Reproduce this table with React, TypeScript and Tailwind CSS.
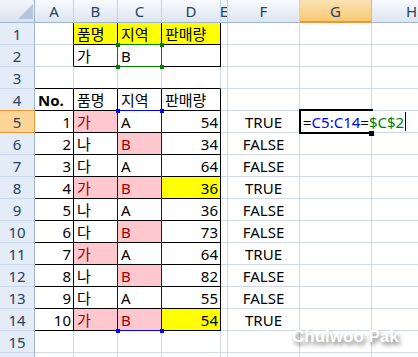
import React from "react";

const cols = ["A", "B", "C", "D", "E", "F", "G", "H"];

type Cell = {
	v?: string;
	align?: "l" | "r" | "c";
	fill?: "yellow" | "pink";
	bold?: boolean;
};

const data = [
	{ no: "1", item: "가", area: "A", qty: "54", ok: "TRUE" },
	{ no: "2", item: "나", area: "B", qty: "34", ok: "FALSE" },
	{ no: "3", item: "다", area: "A", qty: "64", ok: "FALSE" },
	{ no: "4", item: "가", area: "B", qty: "36", ok: "TRUE" },
	{ no: "5", item: "나", area: "A", qty: "36", ok: "FALSE" },
	{ no: "6", item: "다", area: "B", qty: "73", ok: "FALSE" },
	{ no: "7", item: "가", area: "A", qty: "64", ok: "TRUE" },
	{ no: "8", item: "나", area: "B", qty: "82", ok: "FALSE" },
	{ no: "9", item: "다", area: "A", qty: "55", ok: "FALSE" },
	{ no: "10", item: "가", area: "B", qty: "54", ok: "TRUE" },
];

function getCell(r: number, c: number): Cell {
	if (r === 1 && c >= 2 && c <= 4) {
		return { v: ["품명", "지역", "판매량"][c - 2], fill: "yellow" };
	}
	if (r === 2 && c === 2) return { v: "가" };
	if (r === 2 && c === 3) return { v: "B" };
	if (r === 4) {
		if (c === 1) return { v: "No.", bold: true };
		if (c >= 2 && c <= 4) return { v: ["품명", "지역", "판매량"][c - 2] };
	}
	if (r >= 5 && r <= 14) {
		const d = data[r - 5];
		if (c === 1) return { v: d.no, align: "r" };
		if (c === 2) return { v: d.item, fill: d.item === "가" ? "pink" : undefined };
		if (c === 3) return { v: d.area, fill: d.area === "B" ? "pink" : undefined };
		// conditional format: 가 + B rows
		if (c === 4) return { v: d.qty, align: "r", fill: d.item === "가" && d.area === "B" ? "yellow" : undefined };
		if (c === 6) return { v: d.ok, align: "c" };
	}
	return {};
}

// cells inside the two bordered tables (B1:D2, A4:D14)
function inTable(r: number, c: number) {
	return (r >= 1 && r <= 2 && c >= 2 && c <= 4) || (r >= 4 && r <= 14 && c >= 1 && c <= 4);
}

function Corner() {
	return (
		<div className="h-[23px] bg-linear-to-b from-[#f3f6fb] to-[#dae3ee] border-r border-b border-r-[#9eb6ce] border-b-[#9eb6ce] flex items-end justify-end pr-px pb-[3px]">
			<svg width="15" height="15">
				<polygon points="15,0 15,15 0,15" fill="#b4c6dc" />
			</svg>
		</div>
	);
}

function ColHeader({ label }: { label: string }) {
	const selected = label === "G";
	return (
		<div
			className={
				selected
					? "h-[23px] flex items-center justify-center overflow-hidden bg-linear-to-b from-[#fbe2b4] to-[#f7c971] border-r border-r-[#f2b35c] border-b-2 border-b-[#f29436] text-[#27415f]"
					: "h-[23px] flex items-center justify-center overflow-hidden bg-linear-to-b from-[#f8fafd] to-[#dde5f0] border-r border-r-[#c5d2e3] border-b border-b-[#9eb6ce] text-[#27415f]"
			}
		>
			<span className="leading-[21px] pt-px">{label}</span>
		</div>
	);
}

function RowHeader({ n }: { n: number }) {
	let cls = "h-[22px] flex items-center justify-center border-r border-b bg-[#e4ecf7] text-[#27415f] border-r-[#9eb6ce] border-b-[#c9d6e7]";
	if (n === 5) cls = "h-[22px] flex items-center justify-center border-r border-b bg-[#fcd597] text-[#27415f] border-r-[#f29436] border-b-[#f29436]";
	if (n === 4) cls = "h-[22px] flex items-center justify-center border-r border-b bg-[#e4ecf7] text-[#27415f] border-r-[#9eb6ce] border-b-[#f29436]";
	return (
		<div className={cls}>
			{/* row 16 only shows a sliver, its number stays below the fold */}
			<span className="leading-[21px] pt-px">{n < 16 ? n : ""}</span>
		</div>
	);
}

function DataCell({ r, c }: { r: number; c: number }) {
	const cell = getCell(r, c);
	const right = inTable(r, c) || inTable(r, c + 1) ? "border-r-black" : "border-r-[#d0d7e5]";
	const bottom = inTable(r, c) || inTable(r + 1, c) ? "border-b-black" : "border-b-[#d0d7e5]";
	const fill = cell.fill === "yellow" ? "bg-[#ffff00] text-black" : cell.fill === "pink" ? "bg-[#ffc7ce] text-[#9c0006]" : "bg-white text-black";
	const align = cell.align === "r" ? "justify-end pr-[2px]" : cell.align === "c" ? "justify-center" : "justify-start pl-[3px]";
	return (
		<div className={`h-[22px] flex overflow-visible whitespace-nowrap border-r border-b ${right} ${bottom} ${fill} ${align}`}>
			<span className={cell.bold ? "leading-[21px] pt-px font-bold" : "leading-[21px] pt-px"}>{cell.v}</span>
		</div>
	);
}

// formula reference box with the four little squares on its corners
function RangeBox({ className, color }: { className: string; color: string }) {
	return (
		<div className={`absolute border ${className}`}>
			<div className={`absolute -left-[2px] -top-[2px] w-[4px] h-[4px] ${color}`} />
			<div className={`absolute -right-[3px] -top-[2px] w-[4px] h-[4px] ${color}`} />
			<div className={`absolute -left-[2px] -bottom-[3px] w-[4px] h-[4px] ${color}`} />
			<div className={`absolute -right-[3px] -bottom-[3px] w-[4px] h-[4px] ${color}`} />
		</div>
	);
}

export default function App() {
	const rowNums = Array.from({ length: 16 }, (_, i) => i + 1);
	return (
		<div className="relative w-[418px] h-[357px] overflow-hidden bg-white text-[15px] font-['Noto_Sans','Noto_Sans_CJK_KR',sans-serif]">
			<div className="grid grid-cols-[35px_39px_44px_44px_59px_7px_72px_72px_80px] grid-rows-[23px_repeat(16,22px)] w-[452px]">
				<Corner />
				{cols.map((c) => (
					<ColHeader key={c} label={c} />
				))}
				{rowNums.map((r) => (
					<React.Fragment key={r}>
						<RowHeader n={r} />
						{cols.map((_, i) => (
							<DataCell key={i} r={r} c={i + 1} />
						))}
					</React.Fragment>
				))}
			</div>

			<RangeBox className="left-[117px] top-[44px] w-[45px] h-[23px] border-[#008000]" color="bg-[#008000]" />
			<RangeBox className="left-[117px] top-[110px] w-[45px] h-[221px] border-[#0000ff]" color="bg-[#0000ff]" />

			{/* G5 in edit mode */}
			<div className="absolute left-[299px] top-[109px] w-[74px] h-[25px] border-2 border-black">
				<div className="absolute left-0 top-0 h-[21px] flex items-start bg-white pl-[2px] pr-px whitespace-nowrap">
					<span className="leading-[21px] pt-px">
						<span className="text-black">=</span>
						<span className="text-[#0000ff]">C5:C14</span>
						<span className="text-black">=</span>
						<span className="text-[#008000]">$C$2</span>
					</span>
					<span className="w-px h-[19px] mt-px ml-px bg-black" />
				</div>
				<div className="absolute -right-[3px] -bottom-[4px] w-[5px] h-[5px] bg-black" />
			</div>

			{/* watermark */}
			<div className="absolute left-[292px] top-[324px] text-[17px] font-bold text-white font-['Liberation_Sans',sans-serif] [text-shadow:2px_3px_4px_rgba(0,0,0,0.5)]">
				Chulwoo Pak
			</div>
		</div>
	);
}
